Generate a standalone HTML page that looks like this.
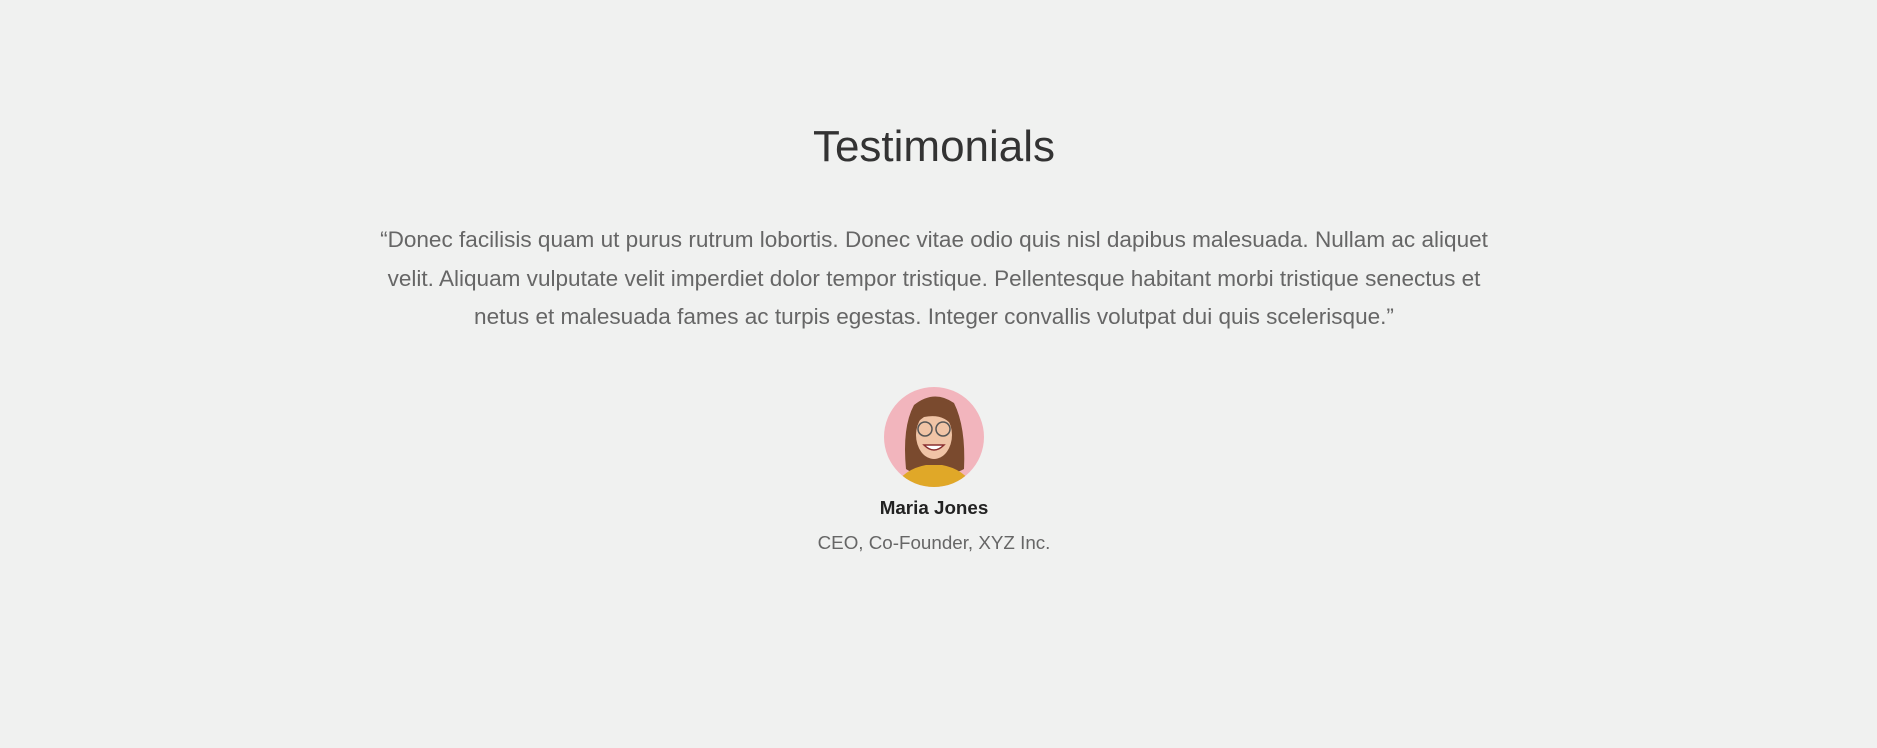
<!DOCTYPE html>
<html><head><meta charset="utf-8"><style>
html,body{margin:0;padding:0}
body{width:1877px;height:748px;background:#f0f1f0;font-family:"Liberation Sans",Arial,sans-serif;position:relative;overflow:hidden}
h2{position:absolute;top:119px;left:0;width:1868px;text-align:center;margin:0;font-weight:normal;font-size:44px;line-height:56px;color:#333}
.q{position:absolute;top:221px;left:364px;width:1140px;text-align:center;margin:0;font-size:22.55px;line-height:38.5px;color:#666}
.av{position:absolute;left:884px;top:387px;width:100px;height:100px;border-radius:50%;overflow:hidden}
.n{position:absolute;top:496px;left:0;width:1868px;text-align:center;font-weight:bold;font-size:18.8px;line-height:24px;color:#222}
.t{position:absolute;top:531px;left:0;width:1868px;text-align:center;font-size:18.8px;line-height:24px;color:#666}
</style></head><body>
<h2>Testimonials</h2>
<p class="q">“Donec facilisis quam ut purus rutrum lobortis. Donec vitae odio quis nisl dapibus malesuada. Nullam ac aliquet velit. Aliquam vulputate velit imperdiet dolor tempor tristique. Pellentesque habitant morbi tristique senectus et netus et malesuada fames ac turpis egestas. Integer convallis volutpat dui quis scelerisque.”</p>
<div class="av"><svg width="100" height="100" viewBox="0 0 100 100">
<rect width="100" height="100" fill="#f2b5bd"/>
<path d="M22 82 Q18 40 30 18 Q50 2 70 16 Q82 40 80 82 Q70 88 50 86 Q30 88 22 82Z" fill="#7a4a2e"/>
<ellipse cx="50" cy="48" rx="18" ry="24" fill="#f0c4a6"/>
<path d="M32 36 Q40 14 62 22 Q70 30 69 40 Q60 26 40 30Z" fill="#7a4a2e"/>
<circle cx="41" cy="42" r="7" fill="none" stroke="#555" stroke-width="1.5"/>
<circle cx="59" cy="42" r="7" fill="none" stroke="#555" stroke-width="1.5"/>
<path d="M40 58 Q50 68 60 58Z" fill="#fff" stroke="#8a3030" stroke-width="1.5"/>
<path d="M10 100 Q20 82 42 78 L58 78 Q80 82 90 100Z" fill="#e0a828"/>
</svg></div>
<div class="n">Maria Jones</div>
<div class="t">CEO, Co-Founder, XYZ Inc.</div>
</body></html>
